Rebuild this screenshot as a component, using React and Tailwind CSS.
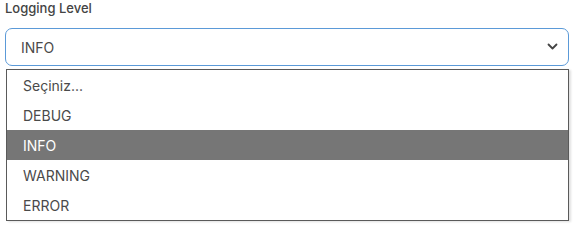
import React from "react";

const options = ["Seçiniz...", "DEBUG", "INFO", "WARNING", "ERROR"];

export default function App() {
  const selected = "INFO";

  return (
    <div className="w-[573px] h-[225px] bg-white font-['Inter',sans-serif] text-[#3a3a3a]">
      <div className="pl-[5px] pr-[4px]">
        <label className="block text-[13px] leading-[14px] pt-px font-medium text-[#444]">
          Logging Level
        </label>

        {/* Select */}
        <div className="mt-[13px] h-[38px] border border-[#5b9ad8] rounded-[7px] flex items-center justify-between pl-[15px] pr-[10px]">
          <span className="text-[14px] text-[#4a4a4a]">{selected}</span>
          <svg width="11" height="8" viewBox="0 0 11 8" fill="none">
            <path d="M1.5 1.5 L5.5 5.5 L9.5 1.5" stroke="#444" strokeWidth="1.8" strokeLinecap="round" strokeLinejoin="round" />
          </svg>
        </div>
      </div>

      {/* Dropdown list */}
      <div className="mt-[3px] ml-[6px] w-[563px] border border-[#5a5a5a] bg-white shadow-[2px_1px_2px_rgba(0,0,0,0.12)]">
        {options.map((opt) => (
          <div
            key={opt}
            className={
              opt === selected
                ? "h-[30px] flex items-center pl-[16px] text-[14px] bg-[#767676] text-white"
                : "h-[30px] flex items-center pl-[16px] text-[14px] text-[#4a4a4a]"
            }
          >
            {opt}
          </div>
        ))}
      </div>
    </div>
  );
}
